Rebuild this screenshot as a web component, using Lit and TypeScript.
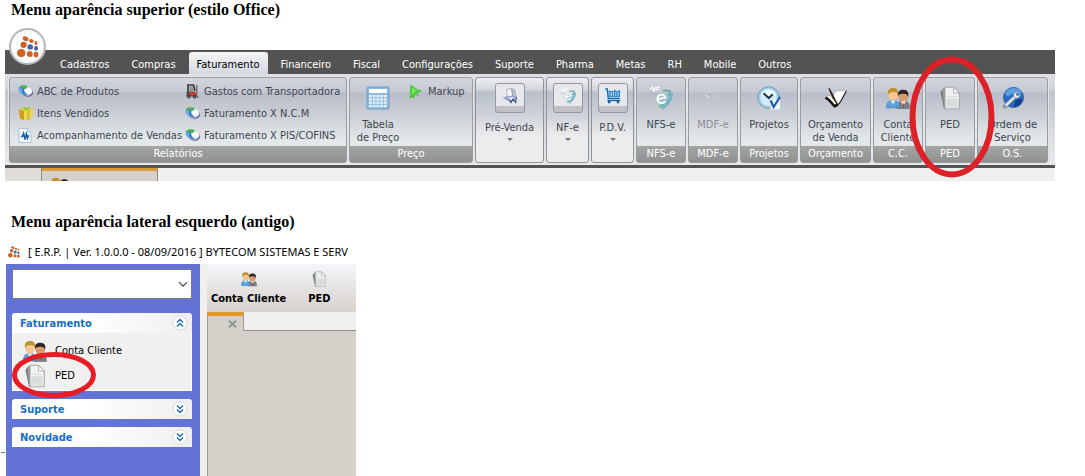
import { LitElement, html, css, svg, TemplateResult } from "lit";
import { customElement, property } from "lit/decorators.js";

type Icon = TemplateResult;

const sphere = html`<svg width="16" height="14" viewBox="0 0 16 14" aria-hidden="true">
  <ellipse cx="9" cy="7.8" rx="6.3" ry="4.8" transform="rotate(20 9 7.8)" fill="#6a6fa0"/>
  <ellipse cx="7.6" cy="6.2" rx="7" ry="4.9" transform="rotate(20 7.6 6.2)" fill="#d3daee"/>
  <ellipse cx="10" cy="6.7" rx="3.8" ry="3" transform="rotate(20 10 6.7)" fill="#fafbff"/>
  <path d="M1 3.2C2.6 1 6.5.6 10 2.4L7.8 5 5.4 5.6Z" fill="#4db04a"/>
  <path d="M1 3.2 6 4.8C5.8 7.4 7 8.8 9.4 11 4.4 11-.8 7.6 1 3.2Z" fill="#2f7fd0"/>
  <path d="M1 3.6 4.2 5C3.8 6.6 4 7.8 5 9.6 2.4 8.6.2 6.4 1 3.6Z" fill="#67b2ea"/>
</svg>`;

const box = html`<svg width="16" height="16" viewBox="0 0 16 16" aria-hidden="true">
  <path d="M1 4.5 8 2.5 15 4.5 14 13 8 15.5 2 13.5Z" fill="#e8bd33"/>
  <path d="M1 4.5 6 6.5V15L2 13.5Z" fill="#cf9c1c"/>
  <path d="M6 6.5 15 4.5 14 13 6 15Z" fill="#f3d54e"/>
  <path d="M2 3.8 6 1.8 8 3.2 11 1.4 14 4.2 6 6.2Z" fill="#c9d94e"/>
  <path d="M6 1.5 8.5 3.6 11.5 1.2 12 3.5 8.6 5 5.2 3.8Z" fill="#8fbf3a"/>
  <path d="M10.4 5.2V14" stroke="#a4bf3a" stroke-width="1.6"/>
</svg>`;

const pulse = html`<svg width="14" height="15" viewBox="0 0 14 15" aria-hidden="true">
  <path d="M1 .5H9.5L13 4V14.5H1Z" fill="#f6fafe" stroke="#a7bcd2" stroke-width=".9"/>
  <path d="M9.5.5V4H13" fill="#dbe7f3" stroke="#a7bcd2" stroke-width=".8"/>
  <path d="M3 8.5H4.4L5.6 5.5 7 11.5 8.4 6 9.5 10 10.2 8H11.4" fill="none" stroke="#17639f" stroke-width="1.6"/>
</svg>`;

const forklift = html`<svg width="14" height="15" viewBox="0 0 14 15" aria-hidden="true">
  <path d="M3 10.5V1H8.5L10 7" fill="none" stroke="#3c3c3c" stroke-width="1.7"/>
  <path d="M4.5 2.5H7.6L8.5 7H4.5Z" fill="#8a9097"/>
  <path d="M1.5 7.5H9L11 10V12.5H1.5Z" fill="#5c4c4c"/>
  <path d="M5 8H10.5L11.5 11.5H5Z" fill="#c23a2e"/>
  <path d="M11.8 1V13H13.6" fill="none" stroke="#6a5a5c" stroke-width="1.2"/>
  <circle cx="3.8" cy="12.8" r="1.8" fill="#333"/><circle cx="9.6" cy="12.8" r="1.8" fill="#333"/>
  <circle cx="3.8" cy="12.8" r=".6" fill="#bbb"/><circle cx="9.6" cy="12.8" r=".6" fill="#bbb"/>
</svg>`;

const markup = html`<svg width="14" height="15" viewBox="0 0 14 15" aria-hidden="true">
  <path d="M1.8 1 8 5.4 12.6 7.2 8.2 8.6 3.8 13 1 14Z" fill="#4fd238" stroke="#46b838" stroke-width=".7"/>
  <path d="M3 3.4 7 6.4 3 10.4Z" fill="#7be862"/>
  <path d="M3.6 11.6 5.4 14M7.6 9.8 9.4 11.6" stroke="#3aa92c" stroke-width="1.2"/>
</svg>`;

const calc = html`<svg width="24" height="24" viewBox="0 0 24 24" aria-hidden="true">
  <rect x="1" y="1" width="22" height="22" rx="1" fill="#8db9de" stroke="#6f9fca"/>
  <rect x="3" y="3" width="18" height="4" fill="#fff"/>
  ${[0, 1, 2, 3].map((r) => [0, 1, 2, 3, 4].map((c) => svg`<rect x=${3 + c * 3.7} y=${9 + r * 3.3} width="2.9" height="2.3" fill="#e6f1fa"/>`))}
</svg>`;

const cartLoad = html`<svg width="16" height="16" viewBox="0 0 16 16" aria-hidden="true">
  <path d="M4.6 1.2 9.6.6 10.8 8 5.4 9Z" fill="#f3f4f9" stroke="#a3a8bc" stroke-width=".8"/>
  <path d="M9.6.6 12.6 2 14 9 10.8 8Z" fill="#c3c8d8" stroke="#7b83a2" stroke-width=".6"/>
  <path d="M.4 9.6 5 8.2 9 11 5 13Z" fill="#a3add6"/>
  <path d="M5 9.4 11 8 13.5 10.4 8 13.2Z" fill="#e0e4f0" stroke="#6c7aac" stroke-width=".7"/>
  <path d="M7 11.4 9 14.6 11 11 13.6 14.4 14.4 9" fill="none" stroke="#3d5293" stroke-width="1.2"/>
</svg>`;

const nfe = (size: number): Icon => html`<svg width=${size} height=${size} viewBox="0 0 22 22" aria-hidden="true">
  <path d="M13 4 19.5 4.6C20 11 16 16.5 10 19.5" fill="none" stroke="#5fb09c" stroke-width="1.6"/>
  <path d="M17 8.4 21.4 7.4C20.5 13 17 17.6 12.4 21" fill="none" stroke="#6faad6" stroke-width="1.5"/>
  <path d="M19 5.5 9.5 18.6M20.4 8.4 12 20" stroke="#7fbcb4" stroke-width="1.2"/>
  <path d="M.8 3.4 3 1 4.4 5 6 .8M7.4 1 7.2 4.4M7.4 1.2H10M7.4 3H9.4" fill="none" stroke="#fff" stroke-width="1.1"/>
  <path d="M1.6 5.4 4.6 8.4 5.4 6" fill="none" stroke="#a2b6bd" stroke-width=".9"/>
  <path d="M8.4 12 15 10.8C14.6 6.4 7.4 7 7.6 12.2 8 16.4 12.8 16.6 15 13.8" fill="none" stroke="#8dbcc6" stroke-width="3"/>
  <path d="M8.4 12 15 10.8C14.6 6.4 7.4 7 7.6 12.2 8 16.4 12.8 16.6 15 13.8" fill="none" stroke="#fff" stroke-width="1.8"/>
</svg>`;

const pdv = html`<svg width="16" height="16" viewBox="0 0 16 16" aria-hidden="true">
  <path d="M.3 1H2.2L3.4 10.5H14.8" fill="none" stroke="#1a6aab" stroke-width="1.5"/>
  <path d="M3.3 3.5H14.6M3.6 8.6H14.6" stroke="#3b96d6" stroke-width="1"/>
  <path d="M5 2.5V9M7.4 4V9M9.7 1.5V9M12 4V9M14.3 2V9" stroke="#2a86cb" stroke-width="1.5"/>
  <path d="M2.2 12.5H15.3" stroke="#1a6aab" stroke-width="1.3"/>
  <circle cx="4.2" cy="14" r="1.4" fill="#1560a0"/><circle cx="13" cy="14" r="1.4" fill="#1560a0"/>
</svg>`;

const faint = html`<svg width="24" height="24" viewBox="0 0 24 24" aria-hidden="true">
  <path d="M5 9 6.5 10.5M7 11 8 11.6M13 10.5 14 9.8" stroke="#f4f7fa" stroke-width="1.3"/>
  <path d="M5.8 8.6 7 9.8" stroke="#9ba4ae" stroke-width=".7"/>
</svg>`;

const clock = html`<svg width="24" height="24" viewBox="0 0 24 24" aria-hidden="true">
  <circle cx="11.5" cy="11.5" r="10.8" fill="#9fcae6" stroke="#6f9dbd"/>
  <circle cx="11.5" cy="11.5" r="8.4" fill="#d3ecfa"/>
  <path d="M3.8 9A8.4 8.4 0 0 1 19.2 9Q11 13 3.8 9" fill="#f0faff"/>
  <path d="M6.5 7.2 11.8 12 15.8 8.2" fill="none" stroke="#18394a" stroke-width="2.1"/>
  <rect x="13.5" y="13.5" width="9.5" height="9.8" fill="#f4f9ff"/>
  <path d="M13.6 14.5 16.6 21 23 11" fill="none" stroke="#165bad" stroke-width="2.2"/>
</svg>`;

const quill = html`<svg width="24" height="24" viewBox="0 0 24 24" aria-hidden="true">
  <path d="M2 10.5 9 9 12 5 22.5 4.5 17 15 12 20 8 18Z" fill="#fdfdfd" stroke="#a8a49c" stroke-width=".7"/>
  <path d="M22.4 5 16.6 15.6 12.4 20.6" fill="none" stroke="#2a2a2a" stroke-width="1.2"/>
  <path d="M1.5 11.5 5 14 10.6 20.4 13.6 18" fill="none" stroke="#111" stroke-width="2.4"/>
  <path d="M4.6 2 9 8.6 13.4 18.4 8 12Z" fill="#5c4638"/>
  <path d="M5 2.4 13.2 18" stroke="#221b17" stroke-width="1.2"/>
</svg>`;

const people = (size: number): Icon => html`<svg width=${size} height=${size} viewBox="0 0 24 24" aria-hidden="true">
  <path d="M11 22.5C11 17 13 15 17.5 15S23.5 17 23.5 22.5Z" fill="#7b8085" stroke="#5a5f64" stroke-width=".5"/>
  <path d="M15 15 17.3 20 19.8 15Z" fill="#f5f5f5"/>
  <path d="M17.4 16 16.8 20 17.6 21.5 18.3 20Z" fill="#b8322b"/>
  <ellipse cx="17.2" cy="10.6" rx="4.8" ry="5" fill="#d99a6c"/>
  <path d="M12.2 10C11.4 5 14 3.8 17.4 3.8 21.8 3.8 23.2 6.8 22 11 21.4 8.6 20 7.6 16.8 7.8 14.4 7.9 13 8.4 12.2 10Z" fill="#2d2724"/>
  <path d="M.5 22C.3 16.6 2.4 14.4 7 14.4S13.3 17 13 22Z" fill="#62a5dd" stroke="#3f82bb" stroke-width=".6"/>
  <path d="M4.6 14.4 7 18 9.4 14.4Z" fill="#eef7ff"/>
  <path d="M3.4 19V22M10.4 19V22" stroke="#3f7aac" stroke-width=".7"/>
  <ellipse cx="7" cy="9" rx="4.9" ry="5.4" fill="#f6c592"/>
  <path d="M2 9C1.2 4 3.2 2 7 2 11 2 12.8 4.2 12 9 11.4 6.8 10.2 5.8 8 6 5 6.2 3 6.4 2 9Z" fill="#c0902f"/>
</svg>`;

const doc = (size: number): Icon => html`<svg width=${size} height=${size} viewBox="0 0 24 24" aria-hidden="true">
  <path d="M2.5 6 6 1.5 7.5 22.8H6Z" fill="#777b7a"/>
  <path d="M4.5 3 14 1V22H6.3Z" fill="#9ca19f"/>
  <path d="M7 1.2H15.5L21.3 7V22.8H7Z" fill="#eff2f1" stroke="#989d9b" stroke-width=".9"/>
  <path d="M7.5 13H20.8V22.3H7.5Z" fill="#dde2e0"/>
  <path d="M15.5 1.2V7H21.3Z" fill="#fff" stroke="#9ba19f" stroke-width=".8"/>
  <path d="M9.5 10.5H19M9.5 13H19M9.5 15.5H19M9.5 18H19" stroke="#ccd2d0" stroke-width=".8"/>
</svg>`;

const wrench = html`<svg width="24" height="24" viewBox="0 0 24 24" aria-hidden="true">
  <circle cx="12.5" cy="11.5" r="10" fill="#2a6cc4" stroke="#1f4f96" stroke-width=".8"/>
  <path d="M4 7.5C7 1 17 0 21 6.5 17 10.5 14 6 10 8.5 8 10 5 11 4 7.5Z" fill="#5d9fe2"/>
  <path d="M14 15C17 12 20 13 21.5 14 20 18 17 20.5 13 21Z" fill="#123f8d"/>
  <path d="M3.8 20.5 14.5 10.2" stroke="#5f6e80" stroke-width="4" stroke-linecap="round"/>
  <path d="M3.8 20.5 14.5 10.2" stroke="#dde5ed" stroke-width="2.6" stroke-linecap="round"/>
  <path d="M13 11.5C11.5 8.5 13.5 5.5 17 5.8L14.8 8.3 16.7 10 19.3 7.8C20 11 16.5 13.8 13 11.5Z" fill="#e6edf3" stroke="#5f6e80" stroke-width=".6"/>
  <circle cx="4.2" cy="20.2" r=".9" fill="#53657c"/>
</svg>`;

const logo = (size: number): Icon => html`<svg width=${size} height=${size} viewBox="0 0 22 22" aria-hidden="true">
  <g fill="#d2601f">
    <ellipse cx="8.6" cy="2.8" rx="3" ry="2.2" transform="rotate(25 8.6 2.8)"/>
    <ellipse cx="14.4" cy="5" rx="2.3" ry="1.8" transform="rotate(20 14.4 5)"/><ellipse cx="19" cy="7" rx="1.6" ry="1.9"/>
    <circle cx="6.6" cy="8.8" r="3.1"/><circle cx="4.2" cy="17" r="4.1"/>
    <ellipse cx="12.8" cy="18" rx="2.9" ry="3"/><ellipse cx="19" cy="18.6" rx="2.4" ry="2.8"/>
  </g>
  <circle cx="13.2" cy="11" r="2.8" fill="#3f68b2"/>
  <ellipse cx="19" cy="12.4" rx="2" ry="2.3" fill="#3f68b2"/>
</svg>`;

const chevrons = (up: boolean): Icon => html`<svg width="16" height="16" viewBox="0 0 16 16" aria-hidden="true">
  <circle cx="8" cy="8" r="7" fill="#fff" stroke="#d3d8e4"/>
  <path d=${up ? "M5 7.5 8 4.5 11 7.5M5 11.5 8 8.5 11 11.5" : "M5 4.5 8 7.5 11 4.5M5 8.5 8 11.5 11 8.5"} fill="none" stroke="#1a6fb8" stroke-width="1.5"/>
</svg>`;

@customElement("ribbon-group")
export class RibbonGroup extends LitElement {
  @property() caption = "";
  @property({ type: Boolean, reflect: true }) marked = false;

  static styles = css`
    :host {
      position: relative;
      display: flex;
      flex-direction: column;
      box-sizing: border-box;
      height: 86px;
      border: 1px solid #999ca0;
      border-radius: 3px;
      box-shadow: 0 0 0 1px #e3e5e9;
      background: linear-gradient(#d2d5dc 0, #c5c9d2 14px, #b8bdc9 15px, #c9ced5 35px, #e2e8e9 62px, #e5eaeb 100%);
    }
    :host([marked]) { z-index: 2; }
    .body { flex: 1; min-height: 0; }
    .caption {
      height: 16px;
      line-height: 16px;
      text-align: center;
      color: #fff;
      background: linear-gradient(#a3a5a5, #909292);
    }
  `;

  render() {
    return html`<div class="body"><slot></slot></div>
      <div class="caption">${this.caption}</div><slot name="mark"></slot>`;
  }
}

@customElement("task-panel")
export class TaskPanel extends LitElement {
  @property() caption = "";
  @property({ type: Boolean }) open = false;

  static styles = css`
    :host { display: block; }
    .head {
      display: flex;
      align-items: center;
      justify-content: space-between;
      box-sizing: border-box;
      width: 100%;
      height: 20px;
      padding: 0 4px 0 8px;
      border: 0;
      border-radius: 3px 3px 0 0;
      background: linear-gradient(90deg, #fff 40%, #efefef);
      color: #1570c6;
      font: bold 11px "DejaVu Sans Condensed", "DejaVu Sans", sans-serif;
      text-align: left;
    }
    .items {
      padding: 5px 10px 2px;
      border: 1px solid #fff;
      border-top: 0;
      background: #f0f0f0;
    }
  `;

  render() {
    return html`<button class="head" aria-expanded=${this.open ? "true" : "false"} @click=${() => (this.open = !this.open)}>
        <span>${this.caption}</span>${chevrons(this.open)}
      </button>
      ${this.open ? html`<div class="items"><slot></slot></div>` : null}`;
  }
}

@customElement("app-root")
export class AppRoot extends LitElement {
  static styles = css`
    :host {
      display: flex;
      flex-direction: column;
      min-height: 100vh;
      background: #fff;
      color: #000;
      font: 11px/13px "DejaVu Sans Condensed", "DejaVu Sans", sans-serif;
    }
    svg { display: block; flex: none; }
    button {
      border: 0;
      padding: 0;
      background: none;
      color: inherit;
      font: inherit;
    }
    h2 {
      margin: 0 11px;
      font: bold 16px/20px "Liberation Serif", serif;
    }
    .second { margin-top: 31px; }

    .ribbon { margin: 30px 30px 0 5px; }
    .top { position: relative; background: #535353; }
    .orb {
      position: absolute;
      left: 4px;
      top: -22px;
      display: grid;
      place-items: center;
      box-sizing: border-box;
      width: 37px;
      height: 37px;
      border: 2px solid #b5b7ba;
      border-radius: 50%;
      background: radial-gradient(#fff 55%, #e4e6e9);
    }
    .tabs {
      display: flex;
      align-items: flex-end;
      height: 24px;
      padding-left: 44px;
      color: #fff;
    }
    .tab {
      height: 22px;
      padding: 2px 11px 0;
      white-space: nowrap;
    }
    .tab.active {
      padding: 2px 8px 0;
      margin: 0 2px;
      border-radius: 3px 3px 0 0;
      background: linear-gradient(#f4f5f7, #d5d9e0);
      color: #000;
    }
    .groups {
      display: flex;
      gap: 2px;
      padding: 3px 4px 2px;
      background: linear-gradient(#dfe1e5 0, #cdd1d8 16px, #bec3cd 17px, #d9dde1 60px, #e8ebec 100%);
      border-bottom: 3px solid #535353;
      color: #3f4550;
    }
    .reports { width: 338px; }
    .price { width: 124px; }
    .narrow { width: 50px; }
    .projects { width: 58px; }
    .wide { width: 71px; }
    .list {
      display: grid;
      grid-template-columns: 167px 1fr;
      grid-auto-rows: 22px;
      padding: 2px 0 0 8px;
    }
    .row {
      display: grid;
      grid-template-columns: 15px 1fr;
      align-items: center;
      gap: 4px;
      text-align: left;
      white-space: nowrap;
    }
    .price-body { display: flex; gap: 3px; align-items: flex-start; }
    .price-body .row { height: 22px; margin-top: 2px; }
    .big {
      display: flex;
      flex-direction: column;
      align-items: center;
      width: 100%;
      padding-top: 8px;
      gap: 8px;
      white-space: nowrap;
    }
    .price-body .big { width: 56px; }
    .off { color: #8a8f96; }
    .drop {
      display: flex;
      flex-direction: column;
      align-items: center;
      box-sizing: border-box;
      height: 86px;
      padding-top: 5px;
      border: 1px solid #8f9297;
      border-radius: 3px;
      background: linear-gradient(#eceef1 0, #d2d5dc 12px, #b9bfcb 14px, #ccd1d9 36px, #ececec 58px, #ececec 100%);
    }
    .drop.wide { width: 69px; }
    .drop.slim { width: 43px; }
    .frame {
      display: grid;
      place-items: start center;
      box-sizing: border-box;
      width: 30px;
      height: 30px;
      padding-top: 4px;
      margin-bottom: 8px;
      border: 1px solid #95989e;
      border-radius: 3px;
      background: linear-gradient(#e6e8ec 22px, #bfc1c5 22px);
    }
    .arrow {
      margin-top: 4px;
      border: 3px solid transparent;
      border-top-color: #777;
      border-bottom: 0;
    }
    .ring-top {
      position: absolute;
      left: -17px;
      top: -22px;
    }
    .strip {
      display: flex;
      height: 13px;
      background: #efefef;
      overflow: hidden;
    }
    .strip-start { width: 36px; border-right: 1px solid #8d8d85; background: #e0ddd9; }
    .strip-tab {
      width: 107px;
      padding: 5px 0 0 8px;
      border-top: 3px solid #d99b38;
      border-right: 1px solid #8d8d85;
      background: #d5d0c9;
    }

    .lower { display: flex; flex: 1; margin-top: 7px; }
    .tick { align-self: flex-end; width: 4px; height: 1px; margin: 0 1px 23px; background: #6374d6; }
    .window { display: flex; flex-direction: column; width: 350px; }
    .title {
      display: flex;
      align-items: center;
      gap: 8px;
      height: 25px;
      padding-left: 2px;
      white-space: nowrap;
      font: 11px/20px "Noto Sans", "Open Sans", sans-serif;
    }
    .panes { display: flex; flex: 1; background: #efefef; }
    .side {
      box-sizing: border-box;
      width: 194px;
      padding: 5px 8px 0 6px;
      background: #6374d6;
    }
    .picker { position: relative; display: block; margin-bottom: 14px; }
    .picker select {
      display: block;
      box-sizing: border-box;
      width: 100%;
      height: 30px;
      border: 1px solid #7a7a7a;
      border-radius: 0;
      background: #fff;
      appearance: none;
    }
    .picker svg { position: absolute; right: 4px; top: 12px; pointer-events: none; }
    task-panel { margin-bottom: 8px; }
    .item {
      position: relative;
      display: grid;
      grid-template-columns: 26px 1fr;
      align-items: center;
      gap: 6px;
      width: 100%;
      height: 25px;
      text-align: left;
    }
    .ring-side { position: absolute; left: -12px; top: -12px; }
    .main { flex: 1; display: flex; flex-direction: column; margin-left: 7px; }
    .tools {
      display: flex;
      gap: 22px;
      height: 48px;
      padding-left: 4px;
      background: linear-gradient(#f5f5fa, #d6d1cb);
      font-weight: bold;
    }
    .tool {
      display: flex;
      flex-direction: column;
      align-items: center;
      gap: 5px;
      padding-top: 7px;
      white-space: nowrap;
    }
    .doc-tabs { display: flex; height: 19px; }
    .doc-tab {
      display: flex;
      justify-content: flex-end;
      align-items: center;
      box-sizing: border-box;
      width: 37px;
      padding-right: 6px;
      border-top: 4px solid #e49b24;
      border-right: 1px solid #999;
      border-left: 1px solid #999;
      background: #d5d0c9;
    }
    .doc-rest { flex: 1; border-bottom: 1px solid #8d9490; background: #f0f0f0; }
    .canvas { flex: 1; border-left: 1px solid #999; background: #d5d0c9; }
  `;

  private tabs = ["Cadastros", "Compras", "Faturamento", "Financeiro", "Fiscal", "Configurações", "Suporte", "Pharma", "Metas", "RH", "Mobile", "Outros"];

  private reports: [Icon, string][] = [
    [sphere, "ABC de Produtos"],
    [forklift, "Gastos com Transportadora"],
    [box, "Itens Vendidos"],
    [sphere, "Faturamento X N.C.M"],
    [pulse, "Acompanhamento de Vendas"],
    [sphere, "Faturamento X PIS/COFINS"],
  ];

  private row(icon: Icon, text: string) {
    return html`<button class="row">${icon}<span>${text}</span></button>`;
  }

  private big(icon: Icon, first: string, second = "", off = false) {
    return html`<button class="big ${off ? "off" : ""}">${icon}<span>${first}${second ? html`<br>${second}` : null}</span></button>`;
  }

  private drop(size: string, icon: Icon, text: string) {
    return html`<button class="drop ${size}"><span class="frame">${icon}</span><span>${text}</span><span class="arrow"></span></button>`;
  }

  render() {
    return html`
      <h2>Menu aparência superior (estilo Office)</h2>
      <section class="ribbon">
        <div class="top">
          <button class="orb" aria-label="Menu principal">${logo(22)}</button>
          <nav class="tabs">
            ${this.tabs.map((t) => html`<button class="tab ${t === "Faturamento" ? "active" : ""}">${t}</button>`)}
          </nav>
        </div>
        <div class="groups">
          <ribbon-group class="reports" caption="Relatórios">
            <div class="list">${this.reports.map(([i, t]) => this.row(i, t))}</div>
          </ribbon-group>
          <ribbon-group class="price" caption="Preço">
            <div class="price-body">${this.big(calc, "Tabela", "de Preço")}${this.row(markup, "Markup")}</div>
          </ribbon-group>
          ${this.drop("wide", cartLoad, "Pré-Venda")}
          ${this.drop("slim", nfe(16), "NF-e")}
          ${this.drop("slim", pdv, "P.D.V.")}
          <ribbon-group class="narrow" caption="NFS-e">${this.big(nfe(24), "NFS-e")}</ribbon-group>
          <ribbon-group class="narrow" caption="MDF-e">${this.big(faint, "MDF-e", "", true)}</ribbon-group>
          <ribbon-group class="projects" caption="Projetos">${this.big(clock, "Projetos")}</ribbon-group>
          <ribbon-group class="wide" caption="Orçamento">${this.big(quill, "Orçamento", "de Venda")}</ribbon-group>
          <ribbon-group class="narrow" caption="C.C.">${this.big(people(24), "Conta", "Cliente")}</ribbon-group>
          <ribbon-group class="narrow" caption="PED" marked>
            ${this.big(doc(24), "PED")}
            <svg slot="mark" class="ring-top" width="86" height="122" viewBox="0 0 86 122" aria-hidden="true">
              <ellipse cx="43" cy="61" rx="39.5" ry="57.5" fill="none" stroke="#dd2128" stroke-width="6"/>
            </svg>
          </ribbon-group>
          <ribbon-group class="wide" caption="O.S.">${this.big(wrench, "Ordem de", "Serviço")}</ribbon-group>
        </div>
        <div class="strip">
          <div class="strip-start"></div>
          <div class="strip-tab">${people(20)}</div>
        </div>
      </section>

      <h2 class="second">Menu aparência lateral esquerdo (antigo)</h2>
      <section class="lower">
        <div class="tick"></div>
        <div class="window">
          <div class="title">${logo(12)}<span>[ E.R.P. | Ver. 1.0.0.0 - 08/09/2016 ] BYTECOM SISTEMAS E SERV</span></div>
          <div class="panes">
            <aside class="side">
              <label class="picker">
                <select aria-label="Pesquisar menu"><option></option></select>
                <svg width="10" height="7" viewBox="0 0 10 7" aria-hidden="true"><path d="M1 1.2 5 5.2 9 1.2" fill="none" stroke="#444" stroke-width="1.2"/></svg>
              </label>
              <task-panel caption="Faturamento" open>
                <button class="item">${people(24)}<span>Conta Cliente</span></button>
                <button class="item">${doc(24)}<span>PED</span>
                  <svg class="ring-side" width="86" height="48" viewBox="0 0 86 48" aria-hidden="true">
                    <ellipse cx="43" cy="24" rx="39.5" ry="20.5" fill="none" stroke="#e81c24" stroke-width="5"/>
                  </svg>
                </button>
              </task-panel>
              <task-panel caption="Suporte"></task-panel>
              <task-panel caption="Novidade"></task-panel>
            </aside>
            <main class="main">
              <div class="tools">
                <button class="tool">${people(16)}<span>Conta Cliente</span></button>
                <button class="tool">${doc(16)}<span>PED</span></button>
              </div>
              <div class="doc-tabs">
                <button class="doc-tab" aria-label="Fechar aba">
                  <svg width="9" height="8" viewBox="0 0 9 8" aria-hidden="true"><path d="M1 .8 8 7.2M8 .8 1 7.2" stroke="#8d9490" stroke-width="1.9"/></svg>
                </button>
                <div class="doc-rest"></div>
              </div>
              <div class="canvas"></div>
            </main>
          </div>
        </div>
      </section>
    `;
  }
}
